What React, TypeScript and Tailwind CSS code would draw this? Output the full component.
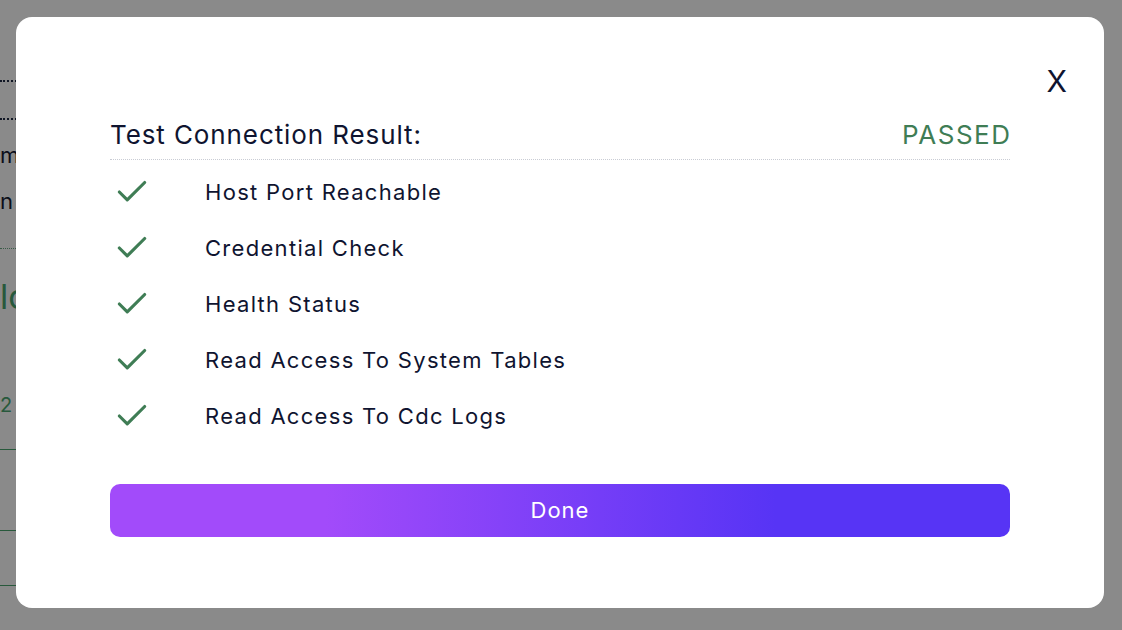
import { Check } from 'lucide-react';

const checks = [
  'Host Port Reachable',
  'Credential Check',
  'Health Status',
  'Read Access To System Tables',
  'Read Access To Cdc Logs',
];

function BackPage() {
  // page behind the dialog, only a sliver shows at the left edge
  return (
    <div className="w-full h-[630px] bg-white overflow-hidden">
      <div className="flex flex-col w-[60px]">
        <div className="mt-[80px] h-[40px] border-y-2 border-dotted border-[#1f2a44]" />
        <p className="mt-[22px] text-[22px] leading-[26px] text-[#141a33]">m</p>
        <p className="mt-[20px] text-[22px] leading-[26px] text-[#141a33]">n</p>
        <div className="mt-[34px] border-t border-dotted border-[#6aa884]" />
        <p className="mt-[30px] text-[34px] leading-[36px] text-[#4aa56f]">lo</p>
        <p className="mt-[78px] text-[20px] leading-[24px] text-[#4aa56f]">2</p>
        <div className="mt-[32px] border-t border-[#4aa56f]" />
        <div className="mt-[80px] -ml-[180px] w-[230px] h-[56px] rounded-full border border-[#4aa56f]" />
      </div>
    </div>
  );
}

export default function App() {
  return (
    <div className="relative w-full h-[630px] font-['Inter','Liberation_Sans',sans-serif]">
      <BackPage />
      <div className="absolute inset-0 bg-black/[0.46] flex items-start">
        <div className="mt-[17px] ml-[16px] w-[1088px] h-[591px] bg-white rounded-[16px] flex flex-col px-[94px]">
          <div className="flex justify-end pt-[47px] -mr-[57px]">
            <button className="text-[30px] leading-[34px] text-[#0f1430]">X</button>
          </div>
          <div className="mt-[21px] flex items-end justify-between pb-[8px] border-b border-dotted border-[#c9ccd4]">
            <h2 className="text-[26px] leading-[32px] tracking-[0.9px] text-[#0f1430]">Test Connection Result:</h2>
            <span className="text-[26px] leading-[32px] tracking-[1.5px] -mr-[1.5px] text-[#3f7d55]">PASSED</span>
          </div>
          <ul className="mt-[16px] flex flex-col gap-[24px]">
            {checks.map((c) => (
              <li key={c} className="flex items-center h-[32px]">
                <Check className="w-[38px] h-[38px] ml-[3px] text-[#3f7d55]" strokeWidth={2} />
                <span className="ml-[54px] text-[22px] leading-[28px] tracking-[1.3px] text-[#0f1430]">{c}</span>
              </li>
            ))}
          </ul>
          <button className="mt-[52px] h-[53px] w-full rounded-[10px] bg-[linear-gradient(90deg,#a24bfa_24%,#5734f5_74%)] text-white text-[22px] tracking-[1px]">
            Done
          </button>
        </div>
      </div>
    </div>
  );
}
